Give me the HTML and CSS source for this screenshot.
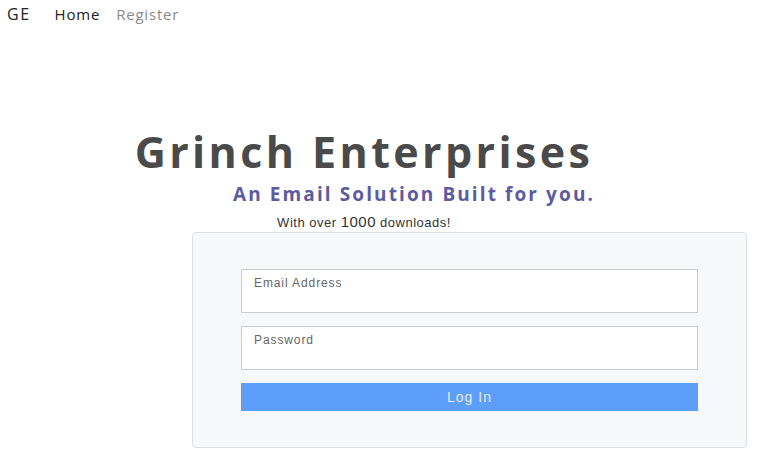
FILE: index.html
```html
<!DOCTYPE html>
<html lang="en">
<head>
<meta charset="utf-8">
<title>Grinch Enterprises</title>
<link rel="stylesheet" href="styles.css">
</head>
<body>
<nav class="nav">
  <span class="brand">GE</span>
  <a class="nav-link active" href="#">Home</a>
  <a class="nav-link muted" href="#">Register</a>
</nav>
<header class="hero">
  <h1 class="title">Grinch Enterprises</h1>
  <h2 class="subtitle">An Email Solution Built for you.</h2>
  <p class="tagline">With over <span class="num">1000</span> downloads!</p>
</header>
<form class="card">
  <label class="field">
    <span class="field-label">Email Address</span>
    <input class="field-input" type="email">
  </label>
  <label class="field">
    <span class="field-label">Password</span>
    <input class="field-input" type="password">
  </label>
  <button class="btn" type="button">Log In</button>
</form>
</body>
</html>
```
FILE: styles.css
```css
* { box-sizing: border-box; }
html, body { margin: 0; padding: 0; background: #fff; }
body { font-family: "Liberation Sans", Arial, sans-serif; color: #333; }

.nav {
  display: flex;
  align-items: center;
  height: 27px;
  padding-left: 7px;
  font-family: "Open Sans", sans-serif;
  font-size: 15px;
  letter-spacing: 0.8px;
}
.brand { color: #222; margin-right: 24px; font-size: 16px; letter-spacing: 1.5px; }
.nav-link { text-decoration: none; margin-right: 16px; }
.nav-link.active { color: #222; }
.nav-link.muted { color: #8a8a8a; }

.hero {
  width: 462px;
  margin: 95px 0 0 133px;
}
.title {
  margin: 0;
  text-align: center;
  font-family: "Open Sans", sans-serif;
  font-weight: 700;
  font-size: 43px;
  line-height: 59px;
  letter-spacing: 3.4px;
  color: #4a4a4a;
}
.subtitle {
  margin: 0;
  text-align: right;
  font-family: "Open Sans", sans-serif;
  font-weight: 700;
  font-size: 19px;
  line-height: 26px;
  letter-spacing: 2.1px;
  color: #5b5b9e;
}
.tagline {
  margin: 7px 0 0;
  text-align: center;
  font-size: 13px;
  line-height: 16px;
  letter-spacing: 0.5px;
  color: #333;
}
.tagline .num { font-size: 15px; }

.card {
  width: 555px;
  margin: 1px 0 0 192px;
  padding: 36px 48px 36px 48px;
  background: #f7f8fa;
  border: 1px solid #dcdfe3;
  border-radius: 4px;
  display: flex;
  flex-direction: column;
  gap: 13px;
}
.field {
  position: relative;
  display: block;
}
.field-label {
  position: absolute;
  left: 13px;
  top: 7px;
  font-size: 12px;
  letter-spacing: 0.9px;
  color: #666;
}
.field-input {
  display: block;
  width: 100%;
  height: 44px;
  border: 1px solid #ccc;
  background: #fff;
  border-radius: 0;
}
.btn {
  height: 28px;
  border: 0;
  background: #5c9efa;
  color: #e3ecfb;
  font-family: "Liberation Sans", Arial, sans-serif;
  font-size: 14px;
  letter-spacing: 1px;
}
```
